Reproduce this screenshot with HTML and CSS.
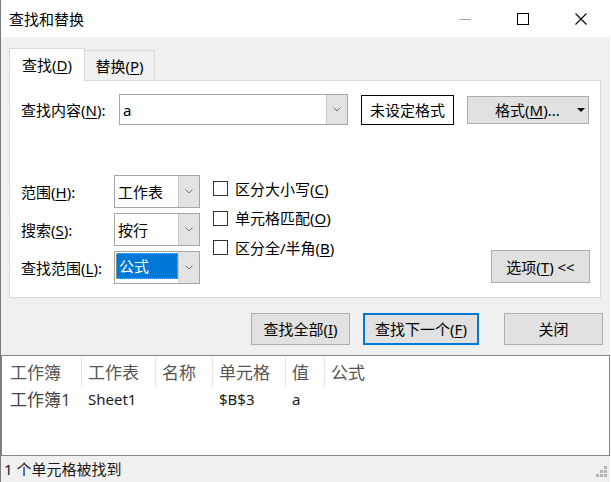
FILE: index.html
```html
<!DOCTYPE html>
<html lang="zh-CN">
<head>
<meta charset="utf-8">
<title>查找和替换</title>
<link rel="stylesheet" href="styles.css">
</head>
<body>
<div class="window">
  <div class="titlebar">
    <span class="title">查找和替换</span>
    <div class="controls">
      <span class="ctl"><svg width="12" height="12" viewBox="0 0 12 12"><line x1="0" y1="6.5" x2="12" y2="6.5" stroke="#a8a8a8" stroke-width="1"/></svg></span>
      <span class="ctl"><svg width="12" height="12" viewBox="0 0 12 12"><rect x="0.5" y="0.5" width="11" height="11" fill="none" stroke="#000" stroke-width="1"/></svg></span>
      <span class="ctl"><svg width="12" height="12" viewBox="0 0 12 12"><path d="M0.5 0.5 L11.5 11.5 M11.5 0.5 L0.5 11.5" stroke="#000" stroke-width="1.1" fill="none"/></svg></span>
    </div>
  </div>

  <div class="main">
    <div class="tabs">
      <div class="tab active">查找(<u>D</u>)</div>
      <div class="tab inactive">替换(<u>P</u>)</div>
    </div>
    <div class="panel">
      <div class="row-find">
        <span class="lbl-find">查找内容(<u>N</u>):</span>
        <div class="combo combo-find">
          <span class="combo-text">a</span>
          <span class="drop"><svg width="8" height="5" viewBox="0 0 8 5"><polyline points="0.5,0.5 4,4 7.5,0.5" fill="none" stroke="#707070" stroke-width="1"/></svg></span>
        </div>
        <div class="fmt-preview">未设定格式</div>
        <div class="btn fmt-btn"><span class="fmt-label">格式(<u>M</u>)...</span><svg class="caret" width="8" height="4" viewBox="0 0 8 4"><polygon points="0,0 8,0 4,4" fill="#000"/></svg></div>
      </div>

      <div class="options">
        <div class="opt-grid">
          <span class="opt-lbl">范围(<u>H</u>):</span>
          <div class="combo combo-sel">
            <span class="combo-text">工作表</span>
            <span class="drop"><svg width="8" height="5" viewBox="0 0 8 5"><polyline points="0.5,0.5 4,4 7.5,0.5" fill="none" stroke="#707070" stroke-width="1"/></svg></span>
          </div>
          <span class="opt-lbl">搜索(<u>S</u>):</span>
          <div class="combo combo-sel">
            <span class="combo-text">按行</span>
            <span class="drop"><svg width="8" height="5" viewBox="0 0 8 5"><polyline points="0.5,0.5 4,4 7.5,0.5" fill="none" stroke="#707070" stroke-width="1"/></svg></span>
          </div>
          <span class="opt-lbl">查找范围(<u>L</u>):</span>
          <div class="combo combo-sel">
            <span class="combo-text selected">公式</span>
            <span class="drop"><svg width="8" height="5" viewBox="0 0 8 5"><polyline points="0.5,0.5 4,4 7.5,0.5" fill="none" stroke="#707070" stroke-width="1"/></svg></span>
          </div>
        </div>

        <div class="checks">
          <div class="check"><span class="box"></span>区分大小写(<u>C</u>)</div>
          <div class="check"><span class="box"></span>单元格匹配(<u>O</u>)</div>
          <div class="check"><span class="box"></span>区分全/半角(<u>B</u>)</div>
        </div>

        <div class="btn opt-btn">选项(<u>T</u>) &lt;&lt;</div>
      </div>
    </div>
  </div>

  <div class="actions">
    <div class="btn act-all">查找全部(<u>I</u>)</div>
    <div class="btn act-next">查找下一个(<u>F</u>)</div>
    <div class="btn act-close">关闭</div>
  </div>

  <div class="results">
    <div class="res-row res-head">
      <span class="cell first">工作簿</span>
      <span class="cell">工作表</span>
      <span class="cell">名称</span>
      <span class="cell">单元格</span>
      <span class="cell">值</span>
      <span class="cell last">公式</span>
    </div>
    <div class="res-row res-data">
      <span class="cell first"><span class="cjk">工作簿1</span></span>
      <span class="cell">Sheet1</span>
      <span class="cell"></span>
      <span class="cell">$B$3</span>
      <span class="cell">a</span>
      <span class="cell last"></span>
    </div>
  </div>

  <div class="status">
    <span>1 个单元格被找到</span>
    <span class="grip"></span>
  </div>
</div>
</body>
</html>
```

FILE: styles.css
```css
* {
  box-sizing: border-box;
}

html,
body {
  margin: 0;
  padding: 0;
  background: #ffffff;
}

body {
  width: 611px;
  height: 482px;
  overflow: hidden;
  font-family: "Noto Sans", "Noto Sans CJK SC", sans-serif;
  font-size: 15px;
  line-height: 20px;
  color: #000;
}

u {
  text-decoration: underline;
  text-decoration-thickness: 1px;
  text-underline-offset: 2px;
}

.window {
  width: 610px;
  height: 482px;
  border-left: 1px solid #7a7a7a;
  background: #f0f0f0;
  display: flex;
  flex-direction: column;
}

/* title bar */
.titlebar {
  flex: none;
  height: 37px;
  background: #ffffff;
  display: flex;
  align-items: center;
}

.title {
  flex: 1;
  padding-left: 8px;
  padding-top: 1px;
}

.controls {
  display: flex;
  height: 37px;
}

.ctl {
  width: 58px;
  height: 37px;
  display: flex;
  align-items: center;
  justify-content: center;
}

/* tabs + panel */
.main {
  flex: none;
  padding: 11px 9px 0 8px;
}

.tabs {
  display: flex;
  align-items: flex-end;
  height: 32px;
  position: relative;
  z-index: 1;
}

.tab {
  height: 30px;
  display: flex;
  align-items: center;
  justify-content: center;
  border: 1px solid #d9d9d9;
  border-bottom: none;
  background: #f0f0f0;
}

.tab.active {
  width: 76px;
  height: 33px;
  margin-bottom: -1px;
  background: #ffffff;
  padding-bottom: 1px;
}

.tab.inactive {
  width: 70px;
  border-left: none;
  padding-top: 1px;
}

.panel {
  width: 592px;
  height: 218px;
  border: 1px solid #d9d9d9;
  background: #ffffff;
  padding: 13px 10px 13px 11px;
  display: flex;
  flex-direction: column;
  justify-content: space-between;
}

.row-find {
  display: flex;
  align-items: flex-start;
  height: 31px;
}

.lbl-find {
  width: 98px;
  line-height: 33px;
}

.combo {
  display: flex;
  border: 1px solid #a6a6a6;
  background: #ffffff;
}

.combo-find {
  width: 229px;
  height: 31px;
}

.combo-text {
  flex: 1;
  padding-left: 3px;
  display: flex;
  align-items: center;
}

.drop {
  width: 21px;
  flex: none;
  background: #e3e3e3;
  border-left: 1px solid #c8c8c8;
  display: flex;
  align-items: center;
  justify-content: center;
}

.fmt-preview {
  width: 93px;
  height: 30px;
  margin-left: 13px;
  margin-top: 1px;
  border: 1px solid #000;
  background: #ffffff;
  display: flex;
  align-items: center;
  justify-content: center;
}

.btn {
  background: #e1e1e1;
  border: 1px solid #adadad;
  display: flex;
  align-items: center;
  justify-content: center;
}

.fmt-btn {
  width: 122px;
  height: 28px;
  margin-left: 13px;
  margin-top: 2px;
  justify-content: flex-start;
  padding-left: 27px;
}

.fmt-label {
  flex: 1;
}

.caret {
  margin-right: 3px;
}

/* options */
.options {
  display: flex;
  height: 109px;
}

.opt-grid {
  display: grid;
  grid-template-columns: 93px 86px;
  grid-auto-rows: 33px;
  row-gap: 5px;
  align-items: center;
}

.combo-sel {
  height: 33px;
}

.combo-sel .combo-text {
  padding-left: 3px;
}

.combo-text.selected {
  flex: none;
  width: 62px;
  height: 26px;
  margin: 1px 0 0 1px;
  padding-left: 2px;
  background: #0078d7;
  color: #ffffff;
  border: 1px dotted #d9a25a;
}

.checks {
  margin-left: 13px;
  margin-top: -1px;
  display: flex;
  flex-direction: column;
}

.check {
  height: 29.5px;
  display: flex;
  align-items: center;
}

.box {
  width: 15px;
  height: 15px;
  border: 1px solid #333333;
  background: #ffffff;
  margin-right: 7px;
}

.opt-btn {
  margin-left: auto;
  align-self: flex-end;
  width: 99px;
  height: 33px;
  margin-bottom: 1px;
}

/* action buttons */
.actions {
  flex: none;
  display: flex;
  justify-content: flex-end;
  margin-top: 15px;
  padding-right: 7px;
  height: 32px;
}

.act-all {
  width: 99px;
}

.act-next {
  width: 116px;
  margin-left: 13px;
  border: 2px solid #0078d7;
}

.act-close {
  width: 99px;
  margin-left: 25px;
}

/* results list */
.results {
  flex: none;
  margin-top: 10px;
  height: 101px;
  border: 1px solid #828790;
  background: #ffffff;
}

.res-row {
  display: grid;
  grid-template-columns: 80px 74px 57px 73px 39px 1fr;
}

.res-head {
  height: 31px;
  font-size: 17px;
  color: #555555;
  padding-top: 1px;
}

.res-head .cell {
  border-right: 1px solid #e5e5e5;
  padding-left: 6px;
  display: flex;
  align-items: center;
  padding-top: 2px;
}

.res-head .cell.first {
  padding-left: 8px;
}

.res-head .cell.last {
  border-right: none;
}

.res-data {
  height: 25px;
  line-height: 25px;
  color: #1a1a1a;
  font-size: 15px;
}

.res-data .cell {
  padding-left: 6px;
}

.res-data .cell.first {
  padding-left: 8px;
}

.cjk {
  font-size: 17px;
  color: #444;
}

/* status bar */
.status {
  flex: 1;
  position: relative;
  padding-left: 3px;
  display: flex;
  align-items: center;
  color: #1a1a1a;
}

.grip {
  position: absolute;
  right: 3px;
  bottom: 5px;
  width: 3px;
  height: 3px;
  background: #b4b4b4;
  box-shadow: -4px 0 0 #b4b4b4, -8px 0 0 #b4b4b4, 0 -4px 0 #b4b4b4, -4px -4px 0 #b4b4b4, 0 -8px 0 #b4b4b4;
}
```
